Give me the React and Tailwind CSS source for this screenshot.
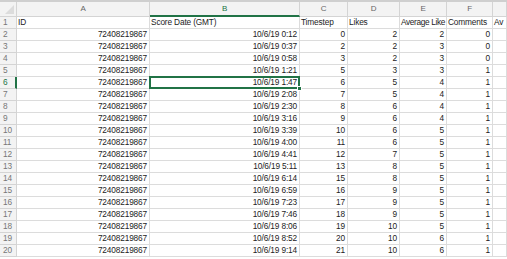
import React from 'react';

const cols = [
  { key: 'A', w: 'w-[133px]' },
  { key: 'B', w: 'w-[150px]' },
  { key: 'C', w: 'w-[48px]' },
  { key: 'D', w: 'w-[52px]' },
  { key: 'E', w: 'w-[47px]' },
  { key: 'F', w: 'w-[46px]' },
  { key: '', w: 'w-[14px]' },
];

const times = ['0:12', '0:37', '0:58', '1:21', '1:47', '2:08', '2:30', '3:16', '3:39', '4:00', '4:41', '5:11', '6:14', '6:59', '7:23', '7:46', '8:06', '8:52', '9:14'];
const steps = [0, 2, 3, 5, 6, 7, 8, 9, 10, 11, 12, 13, 15, 16, 17, 18, 19, 20, 21];
const likes = [2, 2, 2, 3, 5, 5, 6, 6, 6, 6, 7, 8, 8, 9, 9, 9, 10, 10, 10];
const avg = [2, 3, 3, 3, 4, 4, 4, 4, 5, 5, 5, 5, 5, 5, 5, 5, 5, 6, 6];
const comments = [0, 0, 0, 1, 1, 1, 1, 1, 1, 1, 1, 1, 1, 1, 1, 1, 1, 1, 1];

const rows = [
  { vals: ['ID', 'Score Date (GMT)', 'Timestep', 'Likes', 'Average Like', 'Comments', 'Av'], left: true },
  ...times.map((t, i) => ({
    vals: ['72408219867', `10/6/19 ${t}`, steps[i], likes[i], avg[i], comments[i], ''],
  })),
];

export default function App() {
  return (
    <div className="w-[507px] h-[259px] overflow-hidden bg-white text-[#1c1c1c] font-['Liberation_Sans',sans-serif] text-[8.3px] tracking-[-0.15px] leading-none">
      {/* column headers */}
      <div className="flex h-[17px] bg-[#f3f3f3] border-t-2 border-[#cfcfcf]">
        <div className="relative w-[17px] shrink-0 border-r border-b border-[#d4d4d4]">
          <div className="absolute right-[2px] bottom-[2px] w-0 h-0 border-l-[9px] border-t-[9px] border-l-transparent border-t-transparent border-r-0 border-b-[9px] border-b-[#dcdcdc]" />
        </div>
        {cols.map((c) => (
          <div
            key={c.key || 'g'}
            className={`${c.w} shrink-0 flex items-center justify-center border-r border-[#d4d4d4] text-[8px] ${
              c.key === 'B' ? 'text-[#217346] border-b-2 border-b-[#217346]' : 'text-[#666] border-b border-b-[#d4d4d4]'
            }`}
          >
            {c.key}
          </div>
        ))}
      </div>

      {rows.map((r, ri) => {
        const n = ri + 1;
        const sel = n === 6;
        return (
          <div key={n} className="flex h-[12px]">
            <div
              className={`w-[17px] shrink-0 flex items-center pl-[3px] bg-[#f3f3f3] border-b border-[#d4d4d4] ${
                sel ? 'text-[#217346] border-r-2 border-r-[#217346]' : 'text-[#777] border-r border-r-[#d4d4d4]'
              }`}
            >
              {n}
            </div>
            {cols.map((c, ci) => {
              const v = r.vals[ci];
              const isSel = sel && ci === 1;
              return (
                <div
                  key={ci}
                  className={`${c.w} shrink-0 relative flex items-center border-r border-b border-[#dcdcdc] ${
                    r.left ? 'justify-start pl-[1px]' : 'justify-end pr-[2px]'
                  } ${isSel ? 'overflow-visible z-10' : 'overflow-hidden'}`}
                >
                  <span className={`whitespace-nowrap ${r.left && ci === 4 ? 'tracking-[-0.35px]' : ''}`}>{v}</span>
                  {isSel && (
                    <>
                      <div className="absolute -left-[1px] -top-[1px] -right-[1px] -bottom-[1px] border-2 border-[#217346]" />
                      <div className="absolute -right-[3px] -bottom-[3px] w-[5px] h-[5px] bg-[#217346] border border-white" />
                    </>
                  )}
                </div>
              );
            })}
          </div>
        );
      })}
    </div>
  );
}
